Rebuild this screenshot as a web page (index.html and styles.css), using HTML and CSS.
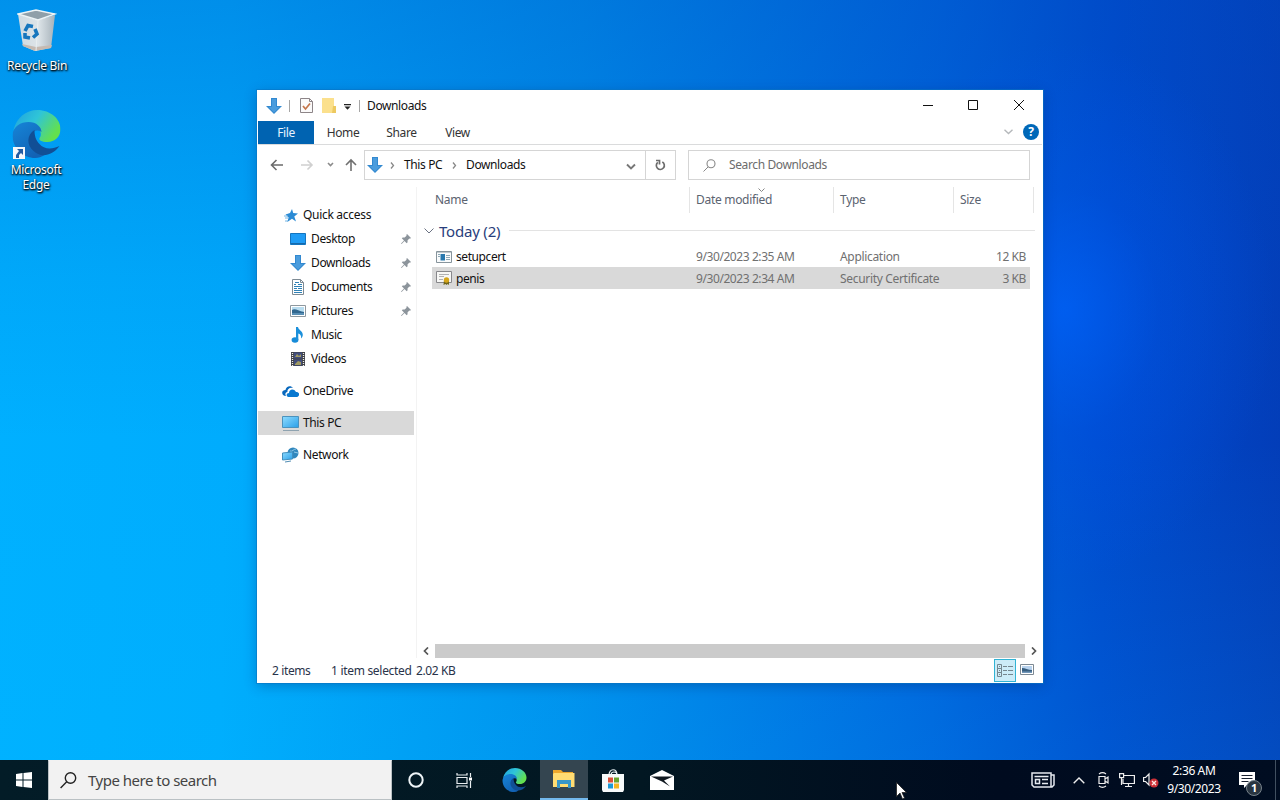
FILE: index.html
```html
<!DOCTYPE html>
<html lang="en">
<head>
<meta charset="utf-8">
<title>Downloads</title>
<link rel="stylesheet" href="styles.css">
</head>
<body>
<svg class="defs" width="0" height="0">
  <defs>
    <linearGradient id="edgeTop" x1="0" y1="0" x2="1" y2=".5"><stop offset="0" stop-color="#1e9fe0"/><stop offset=".5" stop-color="#2fc5d8"/><stop offset="1" stop-color="#63e04e"/></linearGradient>
    <linearGradient id="edgeBody" x1="0" y1="0" x2=".6" y2="1"><stop offset="0" stop-color="#1685d8"/><stop offset="1" stop-color="#1262b4"/></linearGradient>
    <linearGradient id="screen" x1="0" y1="0" x2="1" y2="1"><stop offset="0" stop-color="#8fdcff"/><stop offset="1" stop-color="#2a9fe8"/></linearGradient>
    <linearGradient id="bin" x1="0" y1="0" x2="1" y2="0"><stop offset="0" stop-color="#cfdae1"/><stop offset=".55" stop-color="#dde4e8"/><stop offset="1" stop-color="#a6b2ba"/></linearGradient>
    <symbol id="down" viewBox="0 0 16 16"><path d="M5 0h6v8h5l-8 8-8-8h5z" fill="#3389d0"/><path d="M6 1h4v8h3.500l-5.500 5.500L2.500 9H6z" fill="#4a9cdd"/></symbol>
    <symbol id="edge" viewBox="0 0 48 48">
      <path d="M1 20C4 8 13 0 25 0c13 0 23 9 23 19 0 8-6 13-13 13-6 0-9-2-8-4 3-3 1-9-4-11C16 13 7 14 1 20z" fill="url(#edgeTop)"/>
      <path d="M0 25C1 16 8 12 16 12c8 0 13 5 13 10-6-4-12 1-11 9 1 7 7 12 14 14-3 2-6 3-9 3C10 48 0 38 0 25z" fill="url(#edgeBody)"/>
      <path d="M22 20c-8 5-8 15-1 21 7 7 19 5 26-5-8 4-16 3-20-2-4-4-5-9-5-14z" fill="#114f96"/>
    </symbol>
    <symbol id="pin" viewBox="0 0 10 10"><path d="M6 0l4 4-1 .7-.7-.2-1.800 2 .1 1.800-.9.9L3.500 7 .6 10 0 9.400l3-2.900L.8 4.300l.9-.9 1.900.1 2-1.800L5.300.900z" fill="#8c949b"/></symbol>
    <symbol id="picture" viewBox="0 0 16 12"><path d="M.5.5h15v11H.5z" fill="#fff" stroke="#8e989f"/><path d="M2 2h12v8H2z" fill="#b9ddf0"/><path d="M2 5c3-2 6 1 12 2v3H2z" fill="#31678f"/><path d="M2 8h12v2H2z" fill="#588eb4"/></symbol>
  </defs>
</svg>

<div class="desktop">
  <div class="shortcut recycle">
    <svg width="40" height="44" viewBox="0 0 40 44"><path d="M1 5l5 32 12 5 16-3 4-33-18 5z" fill="url(#bin)"/><path d="M1 5l18-4 19 4-17 6z" fill="#8f9fa9" stroke="#edf3f5" stroke-width="1.400"/><path d="M5 35l14 3 16-2-1 3-16 3-12-5z" fill="#c6bab1"/><path d="M21 11l-2 31" stroke="#e9eef0"/><g fill="none" stroke="#1776bd" stroke-width="3.600"><path d="M8 22l3-5.500 5 1"/><path d="M18 20l2 5-4 3.500"/><path d="M13 29l-5-1v-4"/></g></svg>
    <span>Recycle Bin</span>
  </div>
  <div class="shortcut edge">
    <svg width="49" height="48" viewBox="0 0 48 48"><use href="#edge"/></svg>
    <svg class="link-badge" width="12" height="12" viewBox="0 0 12 12"><path fill="#f5f7fa" d="M0 0h12v12H0z"/><path d="M4 2h6v6L8 6 6 8v3H3V8l3-4z" fill="#245ca2"/></svg>
    <span>Microsoft<br>Edge</span>
  </div>

  <main class="window">
    <header class="titlebar">
      <svg class="t-down" width="16" height="16"><use href="#down"/></svg>
      <i class="rule"></i>
      <svg class="t-check" width="13" height="15" viewBox="0 0 13 15"><path d="M.5.500h9l3 3v11H.5z" fill="#fbfafa" stroke="#8d8588"/><path d="M9.500.5v3h3" fill="none" stroke="#8d8588"/><path d="M3 8l2.500 3L10 5.500" fill="none" stroke="#c4754a" stroke-width="1.700"/></svg>
      <svg class="t-folder" width="14" height="16" viewBox="0 0 14 16"><path d="M0 0h12v10h2v5H0z" fill="#fbe08d"/><path d="M11 8h3v7h-4z" fill="#edc960"/></svg>
      <svg class="t-more" width="7" height="6" viewBox="0 0 7 6"><path d="M0 0h7v1.200H0zM.5 2.500h6L3.500 5.700z" fill="#222"/></svg>
      <i class="rule second"></i>
      <h1>Downloads</h1>
      <svg class="caption" width="101" height="12" viewBox="0 0 101 12" fill="none" stroke="#111"><path d="M0 6.500h10M45.500 1.500h9v9h-9zM91 1l10 10M101 1l-10 10"/></svg>
    </header>
    <nav class="tabs">
      <b>File</b><span>Home</span><span>Share</span><span>View</span>
      <svg class="expand" width="9" height="6" viewBox="0 0 9 6"><path d="M.5.800l4 3.700 4-3.700" fill="none" stroke="#b5b8bb" stroke-width="1.400"/></svg>
      <div class="help">?</div>
    </nav>
    <section class="toolbar">
      <svg class="history" width="88" height="14" viewBox="0 0 88 14" fill="none" stroke-width="1.600"><path d="M13 7H1.500M6.500 2l-5 5 5 5" stroke="#6b6b6b"/><path d="M31 7h11M37.500 2.500L42 7l-4.500 4.500" stroke="#d0d0d0"/><path d="M58 5l2.500 2.500L63 5" stroke="#8b8b8b"/><path d="M81 13V2M76 7l5-5 5 5" stroke="#707070"/></svg>
      <div class="address">
        <svg width="16" height="16"><use href="#down"/></svg>
        <svg class="crumb c1" width="5" height="7" viewBox="0 0 5 7"><path d="M1 .5l2.500 3L1 6.500" fill="none" stroke="#888" stroke-width="1.300"/></svg>
        <span class="this">This PC</span>
        <svg class="crumb c2" width="5" height="7" viewBox="0 0 5 7"><path d="M1 .5l2.500 3L1 6.500" fill="none" stroke="#888" stroke-width="1.300"/></svg>
        <span>Downloads</span>
        <svg class="drop" width="10" height="7" viewBox="0 0 10 7"><path d="M1 1.500l4 4 4-4" fill="none" stroke="#777" stroke-width="1.900"/></svg>
        <div class="refresh"><svg width="11" height="12" viewBox="0 0 11 12"><path d="M7.300 3a4 4 0 1 1-4.500.4M1 1.500h3.500v4" fill="none" stroke="#6c6c6c" stroke-width="1.700"/></svg></div>
      </div>
      <div class="search"><svg width="13" height="13" viewBox="0 0 13 13"><path d="M.5 12.500L5 8" stroke="#888"/><circle cx="8" cy="4.800" r="4" fill="none" stroke="#888" stroke-width="1.100"/></svg><span>Search Downloads</span></div>
    </section>
    <div class="body">
      <aside>
        <div class="row root"><svg width="14" height="13" viewBox="0 0 14 13"><path d="M8 0l1.200 4.100L14 4.500l-3.700 3L12 12.500 8 9.800 3.300 13 4.600 8.500 1.500 5.500 6 4z" fill="#2b8bd5"/><path d="M0 7h4M1 9h3M1 12h3" stroke="#75b5e4"/></svg><span>Quick access</span></div>
        <div class="row"><svg width="16" height="12" viewBox="0 0 16 12"><path d="M.5.500h15v11H.5z" fill="#1f9cf5" stroke="#1475bf"/><path d="M1 10.500h14" stroke="#1669aa"/></svg><span>Desktop</span><svg class="pin" width="10" height="10"><use href="#pin"/></svg></div>
        <div class="row"><svg width="16" height="16"><use href="#down"/></svg><span>Downloads</span><svg class="pin" width="10" height="10"><use href="#pin"/></svg></div>
        <div class="row"><svg width="16" height="16" viewBox="0 0 16 16"><path d="M2.500.500h8l3 3v12h-11z" fill="#fff" stroke="#7e8b94"/><path d="M10.500.5v3h3" fill="none" stroke="#7e8b94"/><path d="M5 3.500h4M4 5.500h2M8 5.500h4M4 7.500h8M4 9.500h3M8 9.500h4M4 11.500h8M4 13.500h8" stroke="#3082b7"/></svg><span>Documents</span><svg class="pin" width="10" height="10"><use href="#pin"/></svg></div>
        <div class="row"><svg width="16" height="12"><use href="#picture"/></svg><span>Pictures</span><svg class="pin" width="10" height="10"><use href="#pin"/></svg></div>
        <div class="row"><svg width="16" height="16" viewBox="0 0 16 16"><ellipse cx="5" cy="13" rx="3.400" ry="2.800" fill="#168bd8"/><path d="M6 0h2c.3 3 5 4 4.800 8-.1 1.500-.8 2.500-1.700 3.500C11.500 8.500 10 7 8.300 6.500v6.500H6z" fill="#1b90db"/></svg><span>Music</span></div>
        <div class="row"><svg width="16" height="16" viewBox="0 0 16 16"><path d="M1 1h14v14H1z" fill="#3e4045"/><path d="M4 1.500h8v6H4zM4 8.500h8v6H4z" fill="#414d7d"/><path d="M5 6l2-3 2 2 2-2v3zM5 13l3-3 3 1v3H5z" fill="#a19b62"/><path d="M2.500 2v13M13.500 2v13" stroke="#eee" stroke-width="1.300" stroke-dasharray="1 1"/></svg><span>Videos</span></div>
        <div class="row root gap"><svg width="17" height="11" viewBox="0 0 17 11"><path d="M1 9C-1 6 1 4 3.500 4 4 0 9-1 11 2 7 1 5 4 5.500 6 3 6 3 9 4 10H3z" fill="#0868bd"/><path d="M6.500 11C3.500 10 4.500 7 7 7c0-4 5-5 7-1 4 0 4 4 1 5z" fill="#0878d0"/></svg><span>OneDrive</span></div>
        <div class="row root gap selected"><svg width="17" height="15" viewBox="0 0 17 15"><path d="M.5.500h16v11H.5z" fill="url(#screen)" stroke="#4b92bd"/><path d="M1 14.500h16" stroke="#8fa3b0"/></svg><span>This PC</span></div>
        <div class="row root gap"><svg width="17" height="16" viewBox="0 0 17 16"><circle cx="11" cy="6" r="5.500" fill="#3187bd"/><path d="M8 4c3 1 3-2 6-2M12 5l4 1" stroke="#91c9e8" fill="none"/><path d="M.5 6l10-1v7l-10 1z" fill="url(#screen)" stroke="#438fbd"/><path d="M3 15l6-1" stroke="#528db3"/></svg><span>Network</span></div>
      </aside>
      <section class="files">
        <svg class="sort" width="7" height="4" viewBox="0 0 7 4"><path d="M.5.500l3 3 3-3" fill="none" stroke="#888"/></svg>
        <div class="columns"><span>Name</span><span>Date modified</span><span>Type</span><span>Size</span></div>
        <div class="group"><svg width="10" height="6" viewBox="0 0 10 6"><path d="M.5.500L5 5 9.500.500" fill="none" stroke="#6b7283"/></svg><h2>Today (2)</h2><hr></div>
        <div class="file"><svg width="16" height="12" viewBox="0 0 16 12"><path d="M.5.500h15v11H.5z" fill="#f9fbfc" stroke="#87949c"/><path d="M1 1.500h14" stroke="#c0c9ce"/><path d="M4.500 3h4.500v6.500H4.500z" fill="#2878ae"/><path d="M2 3.500h2M2 5.500h2M10 4.500h4M10 6.500h4M10 8.500h4" stroke="#8ea8b6"/></svg><span>setupcert</span><span>9/30/2023 2:35 AM</span><span>Application</span><span>12 KB</span></div>
        <div class="file picked"><svg width="16" height="14" viewBox="0 0 16 14"><path d="M.5.500h15v11H.5z" fill="#f7f7f5" stroke="#87878a"/><path d="M3 3.500h10M3 5.500h5M3 8.500h4" stroke="#b1b1b1"/><path d="M8 9l-.5 5 2-1 1 1 1-1 1.500 1V9z" fill="#6e641c"/><circle cx="10.500" cy="9" r="2.700" fill="#d5a51b"/></svg><span>penis</span><span>9/30/2023 2:34 AM</span><span>Security Certificate</span><span>3 KB</span></div>
        <div class="scroll"><svg width="6" height="8" viewBox="0 0 6 8"><path d="M5 .5L1.500 4 5 7.500" fill="none" stroke="#555" stroke-width="1.700"/></svg><i></i><svg width="6" height="8" viewBox="0 0 6 8"><path d="M1 .5L4.500 4 1 7.500" fill="none" stroke="#555" stroke-width="1.700"/></svg></div>
      </section>
    </div>
    <footer>
      <span class="count">2 items</span><span class="chosen">1 item selected</span><span class="bytes">2.02 KB</span>
      <div class="details"><svg width="16" height="13" viewBox="0 0 16 13" fill="none" stroke="#75868e"><path d="M.5.500h4v4h-4zM.5 4.500h4v4h-4zM.5 8.500h4v4h-4zM2 2.500h1M2 6.500h1M2 10.500h1M6 2.500h4M11 2.500h5M6 6.500h4M11 6.500h5M6 10.500h4M11 10.500h5"/></svg></div>
      <svg class="thumb" width="14" height="11" viewBox="0 0 14 11"><path d="M.5.500h13v10H.5z" fill="#fff" stroke="#7d8993"/><path d="M2 2h10v7H2z" fill="#b9d3ee"/><path d="M2 4c3 0 6 2 10 2v3H2z" fill="#385f80"/><path d="M2 7.500h10V9H2z" fill="#7398bb"/></svg>
    </footer>
  </main>

  <div class="taskbar">
    <div class="start"><svg width="16" height="16" viewBox="0 0 16 16"><path d="M0 2l6.500-.900v6.400H0zM7.500.9L16 0v7.500H7.500zM0 8.500h6.500v6.400L0 14zM7.500 8.500H16V16l-8.500-1.100z" fill="#fff"/></svg></div>
    <div class="task-search"><svg width="17" height="17" viewBox="0 0 17 17" fill="none" stroke="#222" stroke-width="1.400"><circle cx="10.500" cy="6" r="5.200"/><path d="M6.700 9.800L.6 16"/></svg><span>Type here to search</span></div>
    <div class="app"><svg width="16" height="16" viewBox="0 0 16 16"><circle cx="8" cy="8" r="6.700" fill="none" stroke="#eef4f7" stroke-width="2"/></svg></div>
    <div class="app"><svg width="17" height="15" viewBox="0 0 17 15" fill="none" stroke="#e8edf0" stroke-width="1.200"><path d="M1 0v2h10V0M1 15v-2h10v2M1 4.500h10v6H1zM14.500 0v4M14.500 8v7"/><path d="M13 4.500h3v3h-3z" fill="#fff" stroke="none"/></svg></div>
    <div class="app third"><svg width="25" height="24"><use href="#edge"/></svg></div>
    <div class="app current"><svg width="22" height="18" viewBox="0 0 22 18"><path d="M0 0h8l2 2h10v4H0z" fill="#eda72c"/><path d="M1 3h20.500v14H0V4z" fill="#ffdc72"/><path d="M4 10h14v8h-3v-4H7v4H4z" fill="#3796c8"/></svg></div>
    <div class="app"><svg width="24" height="23" viewBox="0 0 24 23"><path d="M8 6c0-7 8-7 8 0M10 6c0-4 6-4 6 0" fill="none" stroke="#e9f2f5" stroke-width="1.200"/><path d="M1 5h22v16l-1 2H2l-1-2z" fill="#f7fafa"/><path d="M7 8.500h5v5H7z" fill="#dc5039"/><path d="M13 8.500h5v5h-5z" fill="#68a42e"/><path d="M7 14.500h5v5H7z" fill="#1b99d7"/><path d="M13 14.500h5v5h-5z" fill="#f4b521"/></svg></div>
    <div class="app"><svg width="24" height="20" viewBox="0 0 24 20"><path d="M0 6l12-6 12 6v14H0z" fill="#fff"/><path d="M1 6.500h22l-9 4 6 6-8-5z" fill="#101820"/></svg></div>
    <svg class="tray news" width="24" height="16" viewBox="0 0 24 16" fill="none" stroke="#e5e9ef" stroke-width="1.500"><path d="M1 1h19v14H3l-2-2zM20 3h3v10l-2 2h-2M3.500 4.500h14"/><path d="M4.500 7.500h4v4h-4zM11 7.500h6M11 11.500h6"/></svg>
    <svg class="tray chev" width="12" height="7" viewBox="0 0 12 7"><path d="M.7 6.300L6 1l5.300 5.300" fill="none" stroke="#eee" stroke-width="1.400"/></svg>
    <svg class="tray meet" width="12" height="16" viewBox="0 0 12 16" fill="none" stroke="#eee" stroke-width="1.200"><path d="M2 4.500h6v7H2zM8 7l3-2v6L8 9M2 2c2-1.500 5-1.500 7 0M2 14c2 1.500 5 1.500 7 0"/></svg>
    <svg class="tray net" width="16" height="15" viewBox="0 0 16 15" fill="none" stroke="#eee" stroke-width="1.200"><path d="M5 2.500h10.400v8H4V6M9.500 10.500v3M6 13.500h7M.6.600h4v4h-4zM2.500 5v7"/></svg>
    <svg class="tray mute" width="16" height="16" viewBox="0 0 16 16"><path d="M.6 5.500h2L6 2v11L2.600 9.500h-2z" fill="none" stroke="#eee" stroke-width="1.200"/><circle cx="11" cy="11" r="4.500" fill="#cc3037"/><path d="M9 9l4 4M13 9l-4 4" stroke="#ffe9e4" stroke-width="1.300"/></svg>
    <div class="clock"><span>2:36 AM</span><span class="date">9/30/2023</span></div>
    <div class="action"><svg width="16" height="16" viewBox="0 0 16 16"><path d="M0 0h16v13H8l-3 3v-3H0z" fill="#fff"/><path d="M2.500 3.500h11M2.500 6.500h11M2.500 9.500h7" stroke="#182030"/></svg><b>1</b></div>
    <i class="show"></i>
  </div>
  <svg class="cursor" width="11" height="18" viewBox="0 0 11 18"><path d="M.5.500v14L4 11l2.500 6 2-1L6 10.500h4.500z" fill="#fff" stroke="#222" stroke-width=".8"/></svg>
</div>
</body>
</html>
```
FILE: styles.css
```css
* { box-sizing: border-box; }
body { margin: 0; font: 12px/24px "Noto Sans", "Open Sans", sans-serif; letter-spacing: -.38px; color: #111; }
svg { display: block; flex: none; }
span, h1 { white-space: nowrap; }
.defs { position: absolute; }
.desktop { position: relative; width: 1280px; height: 800px; overflow: hidden; background:
  radial-gradient(ellipse 210px 270px at 1065px 310px, rgba(0,100,255,.65), rgba(0,88,240,.3) 45%, transparent),
  linear-gradient(180deg, rgba(0,75,190,.3), rgba(0,75,190,.08) 35%, transparent 55%, rgba(0,195,255,.12)),
  linear-gradient(91deg, #00b0ff 0%, #00acfd 18%, #008fec 45%, #0063dc 73%, #004bcd 86%, #033db8 100%); }
.shortcut { position: absolute; width: 74px; display: flex; flex-direction: column; align-items: center; color: #fff; text-align: center; line-height: 15px; letter-spacing: -.28px; text-shadow: 0 1px 2px #000, 1px 1px 2px #000; }
.recycle { left: 0; top: 9px; }
.recycle span { margin-top: 5px; }
.edge { left: -1px; top: 110px; }
.edge span { margin-top: 4px; }
.link-badge { position: absolute; left: 14px; top: 37px; }

.window { position: absolute; left: 257px; top: 90px; width: 786px; height: 593px; background: #fff; display: flex; flex-direction: column; box-shadow: 0 0 0 1px #0875c390, 0 3px 12px #00286855; }
.titlebar { height: 31px; flex: none; display: flex; align-items: center; padding: 0 19px 0 9px; }
.rule { width: 1px; height: 12px; background: #a6a6a6; margin-left: 7px; }
.t-check { margin-left: 10px; }
.t-folder { margin-left: 9px; }
.t-more { margin-left: 8px; margin-top: 3px; }
.rule.second { margin-left: 8px; }
h1 { margin: 0 0 0 7px; font-size: 12px; font-weight: 400; }
.caption { margin-left: auto; margin-top: -1px; }
.tabs { height: 24px; flex: none; margin: 0 1px; border-bottom: 1px solid #dadbdc; display: flex; color: #333; }
.tabs b { width: 56px; height: 23px; background: #0063b1; color: #e7f3ff; font-weight: 400; text-align: center; }
.tabs span { width: 58px; text-align: center; }
.tabs span + span { width: 59px; }
.tabs span + span + span { width: 53px; }
.expand { margin: 8px 10px 0 auto; }
.help { width: 16px; height: 16px; margin: 3px 3px 0 0; border-radius: 50%; background: #0068b8; color: #fff; font-weight: 700; line-height: 16px; text-align: center; }
.toolbar { height: 42px; flex: none; display: flex; align-items: flex-start; padding: 5px 13px 0 13px; }
.history { margin: 8px 6px 0 0; }
.address { width: 312px; height: 30px; border: 1px solid #d5d5d5; display: flex; align-items: center; padding-left: 2px; }
.c1 { margin: 0 9px 0 7px; }
.this { width: 39px; }
.c2 { margin: 0 9px; }
.drop { margin: 2px 9px 0 auto; }
.refresh { height: 28px; width: 30px; border-left: 1px solid #d5d5d5; display: flex; align-items: center; justify-content: center; }
.search { width: 342px; height: 30px; margin-left: 12px; border: 1px solid #d5d5d5; display: flex; align-items: center; padding-left: 14px; gap: 13px; color: #6c6c6c; }
.body { flex: 1; min-height: 0; display: flex; }
aside { width: 160px; padding: 16px 2px 0 1px; border-right: 1px solid #f3f3f3; }
.row { height: 24px; display: flex; align-items: center; padding-left: 32px; }
.row span { margin-left: 5px; }
.row.root { padding-left: 24px; }
.row.root:first-child { padding-left: 26px; }
.row.root span { margin-left: 4px; }
.row.root:first-child span { margin-left: 5px; letter-spacing: -.3px; }
.gap { margin-top: 8px; }
.selected { background: #d9d9d9; }
.pin { margin: 0 3px 0 auto; }
.files { width: 626px; position: relative; display: flex; flex-direction: column; }
.sort { position: absolute; left: 341px; top: 1px; }
.columns { height: 26px; margin-right: 9px; display: grid; grid-template-columns: 273px 144px 120px 80px; color: #5b6370; letter-spacing: -.3px; }
.columns span { border-right: 1px solid #e5e5e5; padding-left: 6px; line-height: 26px; }
.columns span:first-child { padding-left: 18px; }
.group { height: 33px; display: flex; align-items: center; padding: 2px 8px 0 7px; }
h2 { margin: 0 9px 0 5px; font: 400 15px/24px "Noto Sans", "Open Sans", sans-serif; letter-spacing: -.2px; color: #293e7c; }
hr { flex: 1; height: 1px; border: 0; margin: 0; background: #e3e3e3; }
.file { height: 21px; display: grid; grid-template-columns: 16px 244px 144px 114px 72px; align-items: center; margin: 0 13px 0 15px; padding-left: 4px; line-height: 21px; color: #707070; }
.file span { letter-spacing: -.42px; }
.file span:nth-child(2) { padding-left: 4px; color: #111; }
.file span:nth-child(4) { letter-spacing: -.32px; }
.file span:last-child { text-align: right; }
.picked { height: 22px; background: #d9d9d9; }
.scroll { height: 15px; margin: auto 6px 0 6px; display: flex; align-items: center; gap: 6px; }
.scroll i { height: 14px; flex: 1; background: #cbcbcb; }
footer { height: 25px; flex: none; display: flex; padding: 0 9px 0 15px; color: #29334a; line-height: 26px; }
.count { width: 59px; }
.chosen { width: 85px; letter-spacing: -.3px; }
.details { width: 22px; height: 23px; margin: 1px 0 0 auto; border: 1px solid #31b3d4; background: #ccecf8; display: flex; align-items: center; justify-content: center; }
.thumb { margin: 6px 0 0 4px; }

.taskbar { position: absolute; left: 0; right: 0; bottom: 0; height: 40px; background: linear-gradient(90deg, #031c27, #021722 50%, #000b1f 78%, #000d21); display: flex; align-items: center; color: #fff; }
.start { width: 48px; padding-left: 16px; }
.task-search { width: 344px; height: 40px; background: #f2f2f2; border: 1px solid #bac1c4; border-top-color: #f2f2f2; display: flex; align-items: center; padding-left: 11px; gap: 11px; color: #444; font-size: 15px; letter-spacing: -.5px; }
.app { width: 49px; height: 40px; display: flex; align-items: center; justify-content: center; }
.task-search + .app { width: 48px; }
.task-search + .app + .app { width: 48px; }
.app.third { width: 52px; }
.app.current { width: 48px; background: #344550; border-bottom: 2px solid #73b9ed; }
.tray { margin-right: 9px; }
.news { margin-left: 345px; margin-right: 18px; }
.chev { margin-right: 12px; }
.meet { margin-right: 10px; }
.net { margin-right: 8px; }
.clock { width: 56px; display: flex; flex-direction: column; line-height: 18px; text-align: center; margin: 0 2px 0 -2px; }
.action { position: relative; margin-left: 15px; }
.action b { position: absolute; left: 7px; top: 8px; width: 16px; height: 16px; border: 1px solid #77828b; border-radius: 50%; background: #293541; text-align: center; line-height: 14px; font-size: 11px; }
.show { width: 1px; height: 40px; background: #415060; margin-left: auto; margin-right: 4px; }
.cursor { position: absolute; left: 896px; top: 782px; }
```
